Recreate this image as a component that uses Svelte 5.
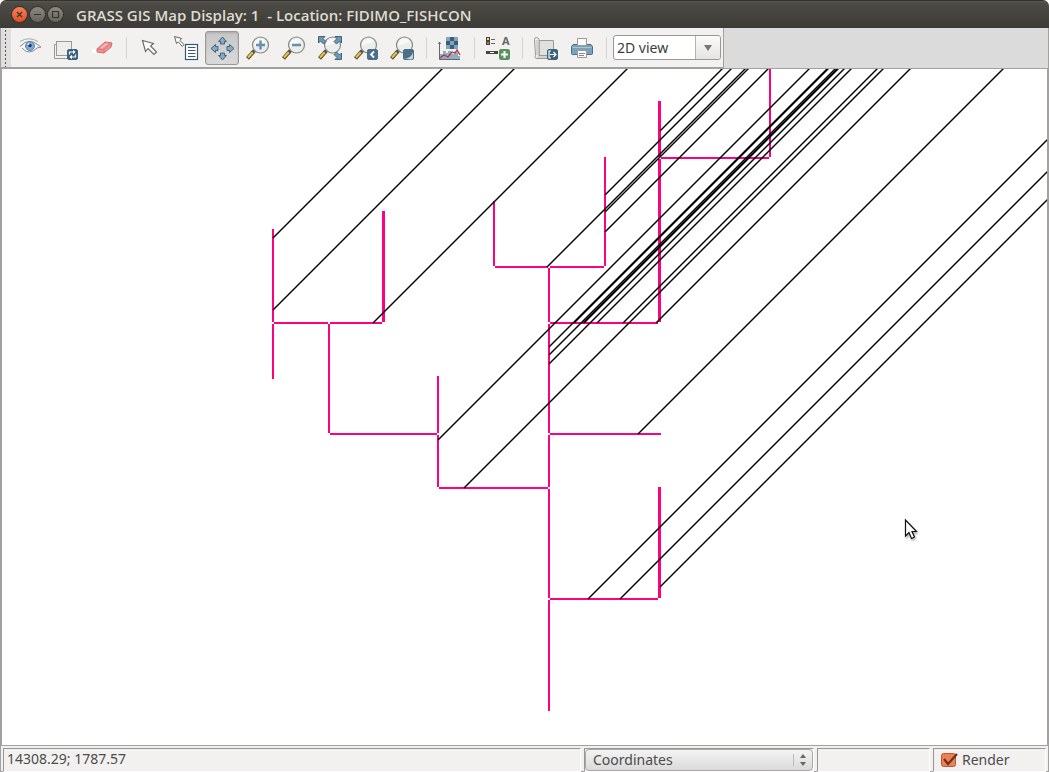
<script lang="ts">
  type Tool = { id: string; label: string };

  // toolbar groups, a separator is drawn after each one
  const groups: Tool[][] = [
    [
      { id: "show", label: "Display map" },
      { id: "render", label: "Re-render display" },
      { id: "erase", label: "Erase display" },
    ],
    [
      { id: "pointer", label: "Pointer" },
      { id: "query", label: "Query raster/vector maps" },
      { id: "pan", label: "Pan" },
      { id: "zoomIn", label: "Zoom in" },
      { id: "zoomOut", label: "Zoom out" },
      { id: "zoomExtent", label: "Zoom to selected maps" },
      { id: "zoomBack", label: "Return to previous zoom" },
      { id: "zoomMenu", label: "Various zoom options" },
    ],
    [{ id: "analyze", label: "Analyze map" }],
    [{ id: "overlay", label: "Add map elements" }],
    [
      { id: "save", label: "Save display to graphic file" },
      { id: "print", label: "Print display" },
    ],
  ];

  let activeTool = $state("pan");
  let viewMode = $state("2D view");
  let statusMode = $state("Coordinates");
  let render = $state(true);

  // map canvas origin in screen coordinates
  const origin = { x: 2, y: 69 };

  // stream segments: x1, y1, x2, y2, width
  const streams = [
    [273, 229, 273, 322, 2], [273, 324, 273, 379, 2],
    [274, 323, 328, 323, 2], [330, 323, 382, 323, 2],
    [383.5, 211, 383.5, 322, 3], [329, 324, 329, 433, 2],
    [330, 434, 437, 434, 2], [438, 376, 438, 433, 2],
    [438, 435, 438, 487, 2], [439, 488, 548, 488, 2],
    [494, 201, 494, 266, 2], [495, 267, 548, 267, 2],
    [550, 267, 604, 267, 2], [605, 157, 605, 266, 2],
    [549, 268, 549, 322, 2], [549, 324, 549, 433, 2],
    [549, 435, 549, 487, 2], [549, 489, 549, 598, 2],
    [549, 600, 549, 711, 2], [550, 323, 658, 323, 2],
    [550, 434, 661, 434, 2], [550, 599, 658, 599, 2],
    [659.5, 101, 659.5, 157, 3], [659.5, 159, 659.5, 322, 3],
    [659.5, 487, 659.5, 598, 3], [661, 158, 769, 158, 2],
    [770, 60, 770, 157, 2],
  ];

  // lower ends of the diagonals, each one runs up to the right at 45 degrees
  const diagonals = [
    [273, 238], [273, 310], [373, 323], [547, 267], [660, 131],
    [605, 195], [605, 212], [605, 232], [438, 440], [549, 347],
    [574, 323], [549, 355], [549, 364], [583, 323], [584, 323],
    [597, 323], [464, 488], [623, 323], [656, 323], [638, 434],
    [588, 599], [620, 599], [660, 587],
  ];
  const reach = 640;
</script>

{#snippet lens()}
  <path d="M8 15 1.5 22.5" stroke="#55503c" stroke-width="4" />
  <path d="M7 16 2 21.5" stroke="#f2c53a" stroke-width="2" />
  <path d="M9.5 13.5 7 16.5" stroke="#555" stroke-width="3" />
  <circle cx="14.5" cy="9" r="8" fill="#ececeb" stroke="#888" stroke-width="1.2" />
  <path d="M8 10a6.5 6.5 0 0 1 12-4q-5 1-12 4z" fill="#fff" opacity=".7" />
{/snippet}

{#snippet badge(color: string)}
  <rect x="13.5" y="13.5" width="10" height="10" rx="1.5" fill={color} stroke={color} />
{/snippet}

{#snippet icon(id: string)}
  <svg class="icon" viewBox="0 0 24 24" fill="none" aria-hidden="true">
    {#if id === "show"}
      <path d="M3 10.5Q11 1 21 10.5 11 20 3 10.5z" fill="#fafafa" />
      <path d="M2 5.5Q11 0 20 5.5" stroke="#aaa" />
      <path d="M2 10.5Q11 1 20 9l3 2-4 1Q11 20 4 12" stroke="#8a8a8a" />
      <circle cx="12" cy="10" r="4.5" fill="#7fa8dc" stroke="#5b86bf" />
      <circle cx="12" cy="9.5" r="1.7" fill="#243650" />
      <circle cx="10.5" cy="8" r="1" fill="#e4efff" />
    {:else if id === "render"}
      <path d="M2.5 8.5h-2v14h13v-2" stroke="#999" />
      <rect x="2.5" y="5.5" width="15" height="14" fill="#ededec" stroke="#999" />
      {@render badge("#3c617d")}
      <path d="M15.5 18.5V16h4M21.5 18.5V21h-4" stroke="#fff" stroke-width="1.2" />
      <path d="m19 13.8 2.5 2.2-2.5 2.2zM18 18.8 15.5 21l2.5 2.2z" fill="#fff" />
    {:else if id === "erase"}
      <path d="M2 13h7v4H2z" fill="#fff" />
      <path d="m7 13 8-7 7 1-1 4-7 6-7-1z" fill="#ed9694" stroke="#d8676a" />
      <path d="m7.5 13 6 1 8-7M14 14v3" stroke="#d8676a" stroke-width=".8" />
      <path d="m11 12 6-4.5" stroke="#fce2e1" />
    {:else if id === "pointer"}
      <path d="m4.5 4.5 3 11 2.5-3 6 6 2.5-2.5-6-6 3-2.5z" fill="#fff" stroke="#666" stroke-width="1.1" />
    {:else if id === "query"}
      <path d="m.5.5 2 7 1.8-1.6 4 4.5 1.8-1.8-4.3-4.2 1.9-1.9z" fill="#fff" stroke="#666" />
      <rect x="11.5" y="8.5" width="12" height="15" fill="#fff" stroke="#365b75" stroke-width="1.2" />
      <path d="M14 11.5h7.5M14 14.5h7.5M14 17.5h7.5M14 20.5h7.5" stroke="#365b75" />
    {:else if id === "pan"}
      {#each [0, 90, 180, 270] as turn}
        <path d="m12.5 1 4 4.5h-2V8h-4V5.5h-2z" transform="rotate({turn} 12.5 12.5)" fill="#86a9c0" stroke="#3d657f" />
      {/each}
    {:else if id === "zoomIn"}
      {@render lens()}
      <path d="M10 9h9M14.5 4.5v9" stroke="#6591ad" stroke-width="2.5" />
    {:else if id === "zoomOut"}
      {@render lens()}
      <path d="M10 9h9" stroke="#6591ad" stroke-width="2.5" />
    {:else if id === "zoomExtent"}
      {@render lens()}
      {#each [0, 90, 180] as turn}
        <path d="M.5.5H7l-2 2 3 3L5.5 8l-3-3-2 2z" transform="rotate({turn} 12 12)" fill="#6f98b2" stroke="#3d657f" />
      {/each}
    {:else if id === "zoomBack"}
      {@render lens()}
      {@render badge("#4a6f88")}
      <path d="m20 15.5-3 3 3 3" stroke="#fff" stroke-width="1.8" />
    {:else if id === "zoomMenu"}
      {@render lens()}
      {@render badge("#4a6f88")}
      <path d="M14 22.5q7 0 9-6v5q0 2-2 2z" fill="#c8d5dd" />
    {:else if id === "analyze"}
      <path d="M8 1h12v12H8z" fill="#3a5e78" />
      <path d="M8 1h4v4H8zM16 1h4v4h-4zM12 5h4v4h-4zM8 9h4v4H8zM16 9h4v4h-4z" fill="#7fa4bb" />
      <path d="M2 23v-5h3v-3h3v2h2v-2h3v3h3v-2h4v4h2v3z" fill="#8fb0c4" />
      <path d="M1.5 6v17.5H22M.5 8l1-2 1 2" stroke="#666" />
      <path d="m2 22 4-3 4 2 4-5 3 1 2-3 3 5" stroke="#b92f3c" stroke-width="1.3" />
    {:else if id === "overlay"}
      <rect x=".5" y="1.5" width="3" height="3" fill="#f3e629" stroke="#444" />
      <rect x=".5" y="5.5" width="3" height="3" fill="#d9605e" stroke="#444" />
      <path d="M5 3.5h4M5 7.5h4" stroke="#666" />
      <path d="M0 16.5h12" stroke="#444" stroke-width="3" />
      <path d="M4 16.5h4" stroke="#fff" />
      <text x="16" y="9" class="letter">A</text>
      {@render badge("#57935b")}
      <path d="M15 18.5h7M18.5 15v7" stroke="#fff" stroke-width="2" />
    {:else if id === "save"}
      <path d="M5 4.5h14.5v15H5z" fill="#e0e0df" stroke="#999" />
      <path d="M.5 3.5q0-2 2-2t2.5 2v16q1 3-2 3t-1.5-3z" fill="#ececeb" stroke="#999" />
      <path d="M3 22.5h11v-3H5" fill="#d2d2d1" stroke="#999" />
      <path d="M3 4v15" stroke="#bbb" />
      {@render badge("#3c617d")}
      <path d="M17 15h-2v7h2M16 18.5h6M19.5 16l2.5 2.5-2.5 2.5" stroke="#fff" stroke-width="1.2" />
    {:else if id === "print"}
      <path d="M3 8.5h18l1.5 2v7q0 1-1 1h-19q-1 0-1-1v-7z" fill="#7ca2b9" stroke="#496f88" />
      <path d="M2.5 11.5h19" stroke="#a9c4d4" />
      <path d="M7.5 2.5h9v7h-9zM7.5 14.5h9v7h-9z" fill="#fff" stroke="#999" />
      <path d="M9 17.5h6M9 19.5h5" stroke="#888" />
    {/if}
  </svg>
{/snippet}

<div class="window">
  <header class="titlebar">
    <button class="control close" aria-label="Close">
      <svg viewBox="0 0 15 15"><path d="m5 5 5 5M10 5l-5 5" /></svg>
    </button>
    <button class="control" aria-label="Minimize">
      <svg viewBox="0 0 15 15"><path d="M4 7.5h7" /></svg>
    </button>
    <button class="control" aria-label="Maximize">
      <svg viewBox="0 0 15 15"><path d="M4.5 4.5h6v6h-6z" /></svg>
    </button>
    <h1>GRASS GIS Map Display: 1 &nbsp;- Location: FIDIMO_FISHCON</h1>
  </header>

  <div class="toolrow">
    <div class="toolbar" role="toolbar" aria-label="Map toolbar">
      <div class="grip"></div>
      {#each groups as group}
        {#each group as tool (tool.id)}
          <button
            class="tool"
            class:active={activeTool === tool.id}
            aria-label={tool.label}
            onclick={() => (activeTool = tool.id)}
          >
            {@render icon(tool.id)}
          </button>
        {/each}
        <span class="separator"></span>
      {/each}
      <div class="combo">
        <select aria-label="View mode" bind:value={viewMode}>
          <option>2D view</option>
          <option>3D view</option>
        </select>
        <span class="drop">
          <svg viewBox="0 0 8 6"><path d="M0 0h8L4 6z" /></svg>
        </span>
      </div>
    </div>
  </div>

  <main class="map">
    <svg class="canvas" role="img" aria-label="Map display">
      <g transform="translate({-origin.x} {-origin.y})">
        <g class="streams">
          {#each streams as [x1, y1, x2, y2, w]}
            <line {x1} {y1} {x2} {y2} stroke-width={w} />
          {/each}
        </g>
        <g class="diagonals">
          {#each diagonals as [x, y]}
            <line x1={x} y1={y} x2={x + reach} y2={y - reach} />
          {/each}
        </g>
        <path class="cursor" d="m905.5 520v16l3.5-3.5 2.5 6 3-1.5-2.5-5.5h4.5z" />
      </g>
    </svg>
  </main>

  <footer class="statusbar">
    <div class="pane">14308.29; 1787.57</div>
    <div class="pane choice">
      <select aria-label="Status bar mode" bind:value={statusMode}>
        <option>Coordinates</option>
        <option>Extent</option>
        <option>Map scale</option>
      </select>
      <svg class="spin" viewBox="0 0 16 14" aria-hidden="true">
        <path class="rule" d="M.5 1v12" />
        <path d="M7 5h6l-3-4zM7 9h6l-3 4z" />
      </svg>
    </div>
    <div class="pane"></div>
    <label class="pane check">
      <input type="checkbox" bind:checked={render} />
      <svg class="tick" viewBox="0 0 18 16" aria-hidden="true">
        <rect x="1.5" y="1.5" width="14" height="13" rx="2" />
        {#if render}
          <path d="m4 7 4 5 9-10" />
        {/if}
      </svg>
      Render
    </label>
  </footer>
</div>

<style>
  :global(body) {
    margin: 0;
    background: #fff;
  }

  .window {
    box-sizing: border-box;
    min-height: 100vh;
    display: grid;
    grid-template-rows: 28px 41px 1fr 26px;
    border-radius: 6px 6px 0 0;
    overflow: hidden;
    background: #f2f1f0;
    color: #4c4c4c;
    font: 14px "Noto Sans", "Open Sans", sans-serif;
  }

  .titlebar {
    display: flex;
    align-items: center;
    gap: 3px;
    padding: 0 12px;
    box-sizing: border-box;
    border-top: 1px solid #33322e;
    background: linear-gradient(#5a5851, #4c4b45 2px, #3c3b37);
  }

  h1 {
    margin: 0 0 0 10px;
    color: #dfdbd2;
    font: 600 15px/20px "Open Sans", "Noto Sans", sans-serif;
    white-space: nowrap;
  }

  .control {
    width: 15px;
    height: 15px;
    padding: 0;
    border: 0;
    border-radius: 50%;
    background: linear-gradient(#8a8880, #66645d);
    box-shadow: 0 0 0 1px #33322e;
  }

  .control.close {
    background: linear-gradient(#f58159, #e2501f);
  }

  .control svg {
    display: block;
    fill: none;
    stroke: #35342f;
    stroke-width: 1.2;
  }

  .toolrow {
    display: flex;
    background: #dbdbdb;
    box-sizing: border-box;
    border: solid #a3a1a0;
    border-width: 0 1px 1px;
  }

  .toolbar {
    display: flex;
    align-items: center;
    gap: 2px;
    padding-right: 2px;
    background: #f2f1f0;
    border-right: 1px solid #a3a1a0;
    border-bottom: 1px solid #a3a1a0;
  }

  .grip {
    align-self: stretch;
    width: 10px;
    background: radial-gradient(circle at 50% 50%, #555 1px, transparent 1px) 3px 5px / 3px 4px repeat-y, #dfdfdf;
  }

  .tool {
    width: 34px;
    height: 34px;
    padding: 4px;
    border: 1px solid transparent;
    border-radius: 3px;
    background: none;
  }

  .tool.active {
    border-color: #999;
    background: linear-gradient(#c6c6c6, #dadada);
    box-shadow: inset 0 1px 2px #aaa;
  }

  .icon {
    display: block;
    width: 24px;
    height: 24px;
    overflow: visible;
  }

  .letter {
    fill: #666;
    font: bold 11px "Noto Sans", sans-serif;
  }

  .separator {
    width: 10px;
    height: 22px;
    background: linear-gradient(#d4d2d0, #d4d2d0) center / 1px 100% no-repeat;
  }

  .combo {
    display: grid;
    grid-template-columns: 1fr 25px;
    width: 108px;
    height: 25px;
    box-sizing: border-box;
    border: 1px solid #999795;
    border-radius: 3px;
    background: #fff;
  }

  .combo select,
  .choice select {
    grid-area: 1 / 1 / 2 / 3;
    appearance: none;
    min-width: 0;
    border: 0;
    background: none;
    color: inherit;
    font: inherit;
  }

  .combo select {
    padding: 0 3px;
    color: #3c3c3c;
  }

  .drop {
    grid-area: 1 / 2;
    display: grid;
    place-items: center;
    border-left: 1px solid #b3b1af;
    background: linear-gradient(#fbfbfb, #e4e4e4);
    border-radius: 0 3px 3px 0;
    pointer-events: none;
  }

  .drop svg {
    width: 8px;
    fill: #777;
  }

  .map {
    display: grid;
    border: solid #a3a1a0;
    border-width: 0 2px 1px;
    background: #fff;
  }

  .canvas {
    width: 100%;
    height: 100%;
    overflow: hidden;
  }

  .streams {
    stroke: #ff007f;
    shape-rendering: crispEdges;
  }

  .diagonals {
    stroke: #000;
    stroke-width: 1.4;
  }

  .cursor {
    fill: #fff;
    stroke: #111;
    stroke-width: 1.2;
    filter: drop-shadow(1px 2px 1px rgba(0, 0, 0, 0.3));
  }

  .statusbar {
    display: grid;
    grid-template-columns: 1fr 230px 113px 113px;
    gap: 3px;
    padding: 2px 2px 1px;
    box-sizing: border-box;
    border: solid #a3a1a0;
    border-width: 0 1px 1px;
  }

  .pane {
    min-width: 0;
    padding-left: 3px;
    box-sizing: border-box;
    border: 1px solid;
    border-color: #999795 #fff #fff #999795;
    line-height: 20px;
    white-space: nowrap;
  }

  .choice {
    display: grid;
    grid-template-columns: 1fr 20px;
    padding: 0;
  }

  .choice select {
    padding: 0 7px;
    border: 1px solid #aaa8a6;
    border-radius: 4px;
    background: linear-gradient(#f4f4f4, #dadada);
  }

  .spin {
    grid-area: 1 / 2;
    align-self: center;
    width: 16px;
    fill: #666;
    pointer-events: none;
  }

  .rule {
    stroke: #bbb;
  }

  .check {
    display: flex;
    align-items: center;
    gap: 4px;
    padding-left: 6px;
  }

  .check input {
    position: absolute;
    opacity: 0;
  }

  .tick {
    width: 18px;
    height: 16px;
    fill: #f08052;
    stroke: #b45a37;
  }

  .tick path {
    fill: none;
    stroke: #65351f;
    stroke-width: 2.2;
  }
</style>
